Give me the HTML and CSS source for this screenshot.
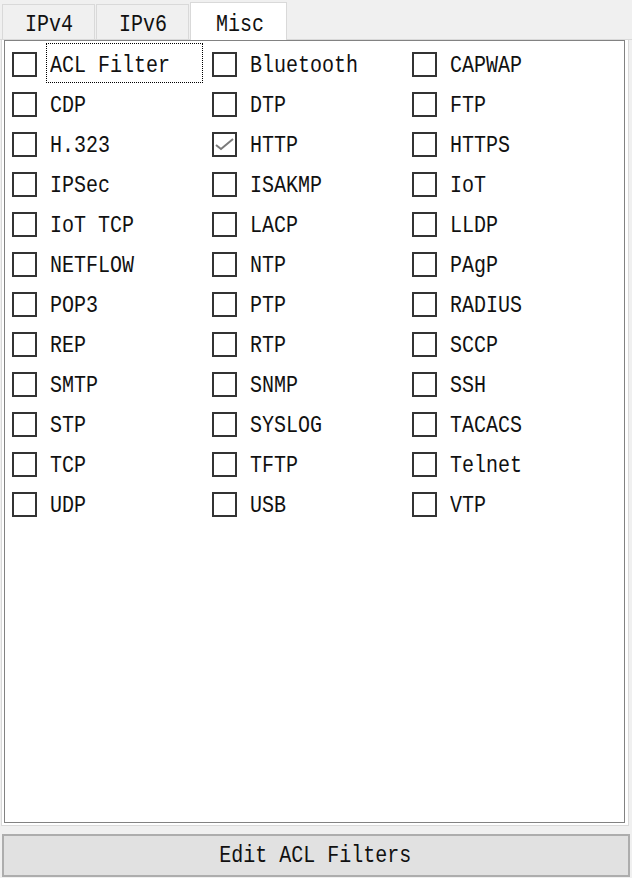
FILE: index.html
```
<!DOCTYPE html>
<html lang="en">
<head>
    <meta charset="UTF-8">
    <meta name="viewport" content="width=device-width, initial-scale=1.0">
    <title>ACL Filters</title>
    <link rel="stylesheet" href="styles.css">
</head>
<body>
    <div class="tab-bar">
        <div class="tab"><span class="txt">IPv4</span></div>
        <div class="tab"><span class="txt">IPv6</span></div>
        <div class="tab selected"><span class="txt">Misc</span></div>
    </div>
    <div class="pane">
        <div class="filter-list">
            <div class="item"><span class="box"></span><span class="label focused"><span class="txt">ACL Filter</span></span></div>
            <div class="item"><span class="box"></span><span class="label"><span class="txt">Bluetooth</span></span></div>
            <div class="item"><span class="box"></span><span class="label"><span class="txt">CAPWAP</span></span></div>

            <div class="item"><span class="box"></span><span class="label"><span class="txt">CDP</span></span></div>
            <div class="item"><span class="box"></span><span class="label"><span class="txt">DTP</span></span></div>
            <div class="item"><span class="box"></span><span class="label"><span class="txt">FTP</span></span></div>

            <div class="item"><span class="box"></span><span class="label"><span class="txt">H.323</span></span></div>
            <div class="item">
                <span class="box">
                    <svg width="21" height="21" viewBox="0 0 21 21"><polyline points="2,11 7,15 19,5" fill="none" stroke="#7a7a7a" stroke-width="2"/></svg>
                </span>
                <span class="label"><span class="txt">HTTP</span></span>
            </div>
            <div class="item"><span class="box"></span><span class="label"><span class="txt">HTTPS</span></span></div>

            <div class="item"><span class="box"></span><span class="label"><span class="txt">IPSec</span></span></div>
            <div class="item"><span class="box"></span><span class="label"><span class="txt">ISAKMP</span></span></div>
            <div class="item"><span class="box"></span><span class="label"><span class="txt">IoT</span></span></div>

            <div class="item"><span class="box"></span><span class="label"><span class="txt">IoT TCP</span></span></div>
            <div class="item"><span class="box"></span><span class="label"><span class="txt">LACP</span></span></div>
            <div class="item"><span class="box"></span><span class="label"><span class="txt">LLDP</span></span></div>

            <div class="item"><span class="box"></span><span class="label"><span class="txt">NETFLOW</span></span></div>
            <div class="item"><span class="box"></span><span class="label"><span class="txt">NTP</span></span></div>
            <div class="item"><span class="box"></span><span class="label"><span class="txt">PAgP</span></span></div>

            <div class="item"><span class="box"></span><span class="label"><span class="txt">POP3</span></span></div>
            <div class="item"><span class="box"></span><span class="label"><span class="txt">PTP</span></span></div>
            <div class="item"><span class="box"></span><span class="label"><span class="txt">RADIUS</span></span></div>

            <div class="item"><span class="box"></span><span class="label"><span class="txt">REP</span></span></div>
            <div class="item"><span class="box"></span><span class="label"><span class="txt">RTP</span></span></div>
            <div class="item"><span class="box"></span><span class="label"><span class="txt">SCCP</span></span></div>

            <div class="item"><span class="box"></span><span class="label"><span class="txt">SMTP</span></span></div>
            <div class="item"><span class="box"></span><span class="label"><span class="txt">SNMP</span></span></div>
            <div class="item"><span class="box"></span><span class="label"><span class="txt">SSH</span></span></div>

            <div class="item"><span class="box"></span><span class="label"><span class="txt">STP</span></span></div>
            <div class="item"><span class="box"></span><span class="label"><span class="txt">SYSLOG</span></span></div>
            <div class="item"><span class="box"></span><span class="label"><span class="txt">TACACS</span></span></div>

            <div class="item"><span class="box"></span><span class="label"><span class="txt">TCP</span></span></div>
            <div class="item"><span class="box"></span><span class="label"><span class="txt">TFTP</span></span></div>
            <div class="item"><span class="box"></span><span class="label"><span class="txt">Telnet</span></span></div>

            <div class="item"><span class="box"></span><span class="label"><span class="txt">UDP</span></span></div>
            <div class="item"><span class="box"></span><span class="label"><span class="txt">USB</span></span></div>
            <div class="item"><span class="box"></span><span class="label"><span class="txt">VTP</span></span></div>
        </div>
    </div>
    <div class="button-row">
        <button type="button" class="edit-button"><span class="txt">Edit ACL Filters</span></button>
    </div>
</body>
</html>
```

FILE: styles.css
```
html, body {
    margin: 0;
    padding: 0;
    width: 632px;
    height: 878px;
    overflow: hidden;
    background-color: #f0f0f0;
    font-family: "Liberation Mono", monospace;
    font-size: 24px;
    color: #111;
}

/* narrow glyphs, 12px per character */
.txt {
    display: inline-block;
    white-space: pre;
    transform: scaleX(0.833);
    transform-origin: left center;
    line-height: 24px;
}

.tab-bar {
    display: flex;
    align-items: flex-end;
    height: 40px;
    padding-left: 2px;
    border-bottom: 1px solid #d9d9d9;
    box-sizing: border-box;
}

.tab {
    height: 35px;
    width: 93px;
    box-sizing: border-box;
    border: 1px solid #d9d9d9;
    border-bottom: none;
    margin-right: 1px;
    background-color: #f0f0f0;
    padding: 6px 0 0 22px;
}

.tab.selected {
    height: 38px;
    width: 97px;
    background-color: #fff;
    margin-bottom: -1px;
    padding: 8px 0 0 25px;
}

.pane {
    margin-left: 1px;
    width: 628px;
    height: 786px;
    box-sizing: border-box;
    border: 1px solid #d9d9d9;
    border-top: none;
    background-color: #fff;
    padding: 0 3px 2px 2px;
}

.filter-list {
    height: 100%;
    box-sizing: border-box;
    border: 1px solid #828282;
    padding: 2px 0 0 7px;
    display: grid;
    grid-template-columns: 200px 200px 200px;
    grid-auto-rows: 40px;
    align-content: start;
}

.item {
    display: flex;
    align-items: flex-start;
    height: 40px;
}

.box {
    width: 25px;
    height: 25px;
    box-sizing: border-box;
    border: 2px solid #333;
    margin-top: 9px;
    margin-right: 9px;
    display: flex;
    align-items: center;
    justify-content: center;
}

.label {
    width: 157px;
    height: 40px;
    box-sizing: border-box;
    border: 1px dotted transparent;
    padding: 8px 0 0 3px;
}

.label.focused {
    border-color: #000;
}

.button-row {
    padding: 8px 2px 2px 2px;
}

.edit-button {
    display: flex;
    align-items: center;
    justify-content: center;
    width: 628px;
    height: 43px;
    box-sizing: border-box;
    margin: 0;
    background-color: #e1e1e1;
    border: 2px solid #adadad;
    font-family: inherit;
    font-size: 24px;
    color: #111;
    padding: 0;
}

.edit-button .txt {
    transform-origin: center center;
    margin-left: -2px;
}
```
